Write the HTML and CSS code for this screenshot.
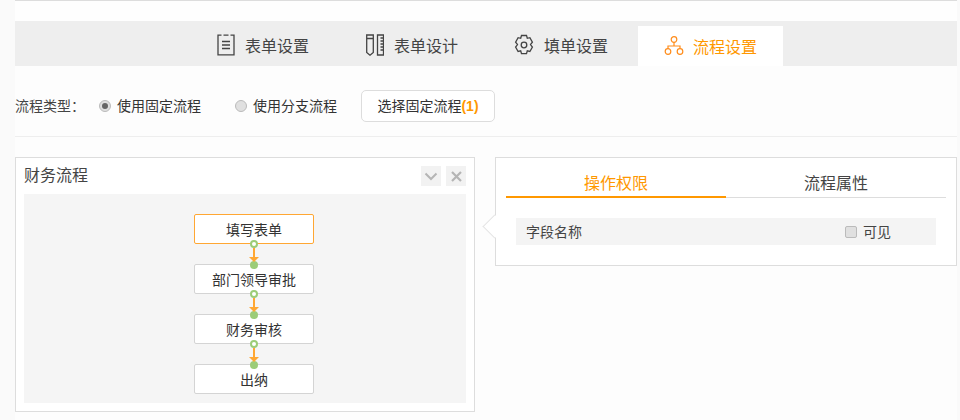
FILE: index.html
```html
<!DOCTYPE html>
<html lang="zh">
<head>
<meta charset="utf-8">
<title>流程设置</title>
<link rel="stylesheet" href="styles.css">
</head>
<body>
<div class="page">
  <div class="top-strip"></div>
  <nav class="tabs">
    <a class="tab tab-a">
      <svg class="ico" width="18" height="22" viewBox="0 0 18 22" fill="none" stroke="#444" stroke-width="1.300"><path d="M4.500 1.200H1v19.600h16V1.200h-3.500M6.500 1.200h5M5 7.500h8M5 11h8M5 14.500h8"/></svg>
      <span>表单设置</span>
    </a>
    <a class="tab tab-b">
      <svg class="ico" width="18" height="22" viewBox="0 0 18 22" fill="none" stroke="#444" stroke-width="1.300"><path d="M.7 1h6.600v17.500L4 21.200.7 18.500zM.7 4.500h6.600"/><path d="M11.500 1h6v20h-6zM14.500 4h3M14.500 7h3M14.500 10h3M14.500 13h3M14.500 16h3"/></svg>
      <span>表单设计</span>
    </a>
    <a class="tab tab-c">
      <svg class="ico" width="20" height="22" viewBox="0 0 20 22" fill="none" stroke="#444" stroke-width="1.300"><path d="M7.500 1.500h5l.8 2.800 2.600-.6 2.500 4.400-1.900 2.500 1.900 2.500-2.500 4.400-2.600-.7-.8 2.800h-5l-.8-2.800-2.600.7L1.600 13.100l1.900-2.500-1.900-2.500 2.500-4.400 2.600.6z"/><circle cx="10" cy="11" r="2.800"/></svg>
      <span>填单设置</span>
    </a>
    <a class="tab tab-active">
      <svg class="ico" width="20" height="20" viewBox="0 0 20 20" fill="none" stroke="#ff8c1a" stroke-width="1.200"><circle cx="10" cy="3.500" r="2.800"/><circle cx="4" cy="15.500" r="2.800"/><circle cx="16" cy="15.500" r="2.800"/><path d="M10 6.500v3.500M4 12.500V10h12v2.500"/></svg>
      <span>流程设置</span>
    </a>
  </nav>
  <div class="toolbar">
    <span class="type-label">流程类型<span class="colon">：</span></span>
    <label class="radio radio-first"><i class="radio-dot is-on"></i><span>使用固定流程</span></label>
    <label class="radio radio-second"><i class="radio-dot"></i><span>使用分支流程</span></label>
    <button class="pick-btn">选择固定流程<b>(1)</b></button>
  </div>
  <div class="work">
    <section class="flow-panel">
      <header class="flow-head">
        <h2>财务流程</h2>
        <span class="head-btn"><svg width="14" height="9" viewBox="0 0 14 9" fill="none" stroke="#b5b5b5" stroke-width="2"><path d="M1.500 1.500L7 7l5.500-5.500"/></svg></span>
        <span class="head-btn"><svg width="11" height="11" viewBox="0 0 11 11" fill="none" stroke="#b5b5b5" stroke-width="2.200"><path d="M1 1l9 9M10 1l-9 9"/></svg></span>
      </header>
      <div class="flow-canvas">
        <div class="node node-on">填写表单<span class="link"></span></div>
        <div class="node">部门领导审批<span class="link"></span></div>
        <div class="node">财务审核<span class="link"></span></div>
        <div class="node">出纳</div>
      </div>
    </section>
    <section class="prop-panel">
      <i class="pointer"></i>
      <div class="prop-tabs">
        <span class="prop-tab prop-on">操作权限</span>
        <span class="prop-tab">流程属性</span>
      </div>
      <div class="field-row">
        <span class="field-name">字段名称</span>
        <label class="check"><i class="check-box"></i><span>可见</span></label>
      </div>
    </section>
  </div>
</div>
</body>
</html>
```
FILE: styles.css
```css
*, *::before, *::after { box-sizing: border-box; }
html, body { margin: 0; height: 420px; overflow: hidden; }
body {
  background: #fafafa;
  font-family: "Noto Sans CJK SC", "Liberation Sans", sans-serif;
  color: #333;
  font-size: 14px;
}
.page {
  width: 942px;
  height: 420px;
  margin-left: 15px;
  background: #fdfdfd;
}
.top-strip {
  height: 21px;
  background: #fefefe;
  border-top: 1px solid #ddd;
}
.tabs {
  display: flex;
  height: 45px;
  background: #eee;
  align-items: flex-end;
  padding-left: 202px;
}
.tab {
  height: 40px;
  padding-bottom: 2px;
  display: flex;
  align-items: center;
  gap: 10px;
  font-size: 16px;
  color: #444;
}
.tab-a { width: 149px; }
.tab-b { width: 148px; }
.tab-c { width: 124px; }
.tab-active {
  width: 145px;
  background: #fff;
  color: #ff9800;
  padding-left: 26px;
  gap: 9px;
  padding-bottom: 0;
}
.ico { flex: none; }
.toolbar {
  height: 71px;
  display: flex;
  align-items: center;
  border-bottom: 1px solid #eee;
  padding-top: 10px;
}
.type-label { width: 84px; color: #444; padding-bottom: 2px; }
.colon { font-family: "Noto Sans CJK TC", sans-serif; }
.radio { display: flex; align-items: center; gap: 6px; color: #333; line-height: 18px; }
.radio span { padding-bottom: 2px; }
.radio-first { width: 136px; }
.radio-second { width: 126px; }
.radio-dot {
  width: 12px; height: 12px;
  border-radius: 50%;
  border: 1px solid #bbb;
  background: #e0e0e0;
  position: relative;
}
.radio-dot.is-on::after {
  content: "";
  position: absolute;
  left: 2px; top: 2px;
  width: 6px; height: 6px;
  border-radius: 50%;
  background: #666;
}
.pick-btn {
  width: 134px;
  height: 32px;
  padding: 0 0 2px;
  background: #fff;
  border: 1px solid #ddd;
  border-radius: 5px;
  font: inherit;
  color: #333;
}
.pick-btn b { color: #ff9800; font-family: "Liberation Sans", sans-serif; }
.work {
  display: flex;
  align-items: flex-start;
  margin-top: 20px;
  gap: 20px;
}
.flow-panel {
  flex: none;
  width: 460px;
  height: 255px;
  background: #fff;
  border: 1px solid #ddd;
  padding: 0 8px;
}
.flow-head {
  height: 36px;
  display: flex;
  align-items: center;
  gap: 5px;
}
.flow-head h2 {
  margin: 0 auto 4px 0;
  font-size: 16px;
  font-weight: 400;
  color: #444;
}
.head-btn {
  width: 20px; height: 20px;
  background: #f2f2f2;
  display: flex;
  align-items: center;
  justify-content: center;
}
.flow-canvas {
  height: 209px;
  background: #f5f5f5;
  display: flex;
  flex-direction: column;
  align-items: center;
  padding: 20px 0 0 18px;
  gap: 20px;
}
.node {
  position: relative;
  width: 120px;
  height: 30px;
  flex: none;
  background: #fff;
  border: 1px solid #d4d4d4;
  border-radius: 2px;
  display: flex;
  align-items: center;
  justify-content: center;
  color: #333;
}
.node-on { border-color: #ffa733; }
.link {
  position: absolute;
  left: 55px;
  top: 25px;
  width: 8px;
  height: 18px;
  z-index: 1;
}
.link::before {
  content: "";
  position: absolute;
  left: 0; top: 0;
  width: 8px; height: 8px;
  border-radius: 50%;
  background: #fff;
  border: 2px solid #9ccc78;
}
.link::after {
  content: "";
  position: absolute;
  left: 3px; top: 8px;
  width: 2px; height: 10px;
  background: #ffa733;
}
.node + .node::before {
  content: "";
  position: absolute;
  left: 54px; top: -8px;
  border-style: solid;
  border-color: #ffa733 transparent transparent;
  border-width: 5px 5px 0;
  z-index: 2;
}
.node + .node::after {
  content: "";
  position: absolute;
  left: 55px; top: -4px;
  width: 8px; height: 8px;
  border-radius: 50%;
  background: #9ccc78;
  z-index: 1;
}
.prop-panel {
  position: relative;
  flex: none;
  width: 462px;
  height: 109px;
  background: #fff;
  border: 1px solid #ddd;
  padding: 10px 10px 0;
}
.pointer {
  position: absolute;
  left: -10px;
  top: 60px;
  width: 17px; height: 17px;
  background: #fff;
  border-left: 1px solid #e4e4e4;
  border-bottom: 1px solid #e4e4e4;
  transform: rotate(45deg);
}
.prop-tabs { display: flex; border-bottom: 1px solid #ddd; height: 30px; }
.prop-tab {
  flex: 1;
  text-align: center;
  font-size: 16px;
  line-height: 28px;
  color: #444;
  height: 30px;
}
.prop-on { color: #ff9800; border-bottom: 2px solid #ff9800; }
.field-row {
  display: flex;
  align-items: center;
  margin: 20px 10px 0;
  height: 27px;
  background: #f4f4f4;
  padding-left: 10px;
}
.field-name { width: 319px; color: #444; padding-bottom: 2px; }
.check { display: flex; align-items: center; gap: 6px; color: #444; line-height: 18px; }
.check span { padding-bottom: 2px; }
.check-box {
  width: 12px; height: 12px;
  background: #e0e0e0;
  border: 1px solid #bbb;
  border-radius: 2px;
}
```
